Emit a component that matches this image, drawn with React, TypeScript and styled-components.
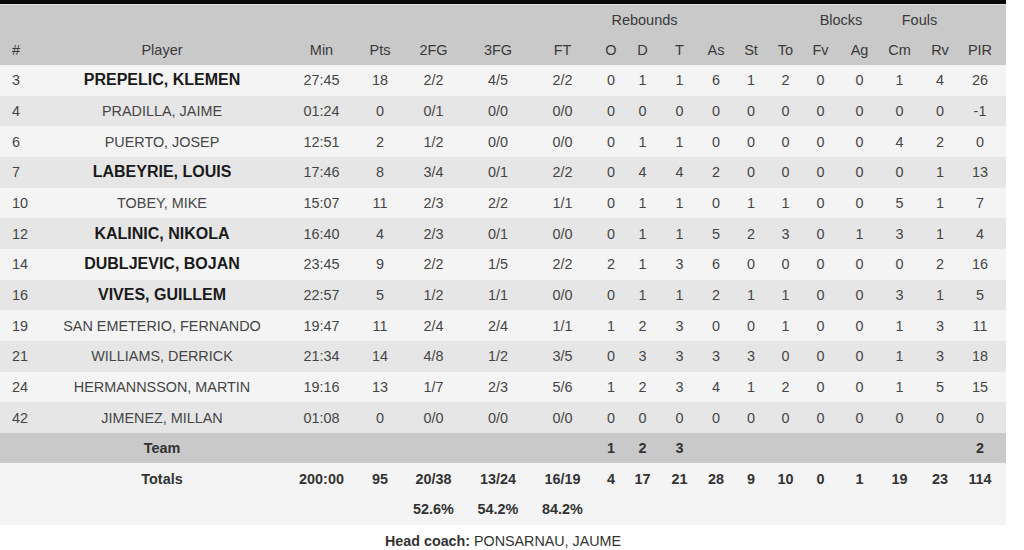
import React from "react";
import styled, { createGlobalStyle, css } from "styled-components";

const GlobalStyle = createGlobalStyle`
  html, body { margin: 0; padding: 0; background: #ffffff; }
  body { font-family: "Liberation Sans", Arial, sans-serif; }
`;

type Col = { key: string; width: number; shift: number };

const COLS: Col[] = [
  { key: "#", width: 32, shift: 0 },
  { key: "Player", width: 260, shift: 0 },
  { key: "Min", width: 59, shift: 0 },
  { key: "Pts", width: 56, shift: 1 },
  { key: "2FG", width: 59, shift: -3 },
  { key: "3FG", width: 64, shift: 0 },
  { key: "FT", width: 57, shift: 4 },
  { key: "O", width: 40, shift: 4 },
  { key: "D", width: 34, shift: -1.5 },
  { key: "T", width: 37, shift: 0 },
  { key: "As", width: 36, shift: 0 },
  { key: "St", width: 34, shift: 0 },
  { key: "To", width: 35, shift: 0 },
  { key: "Fv", width: 37, shift: -1 },
  { key: "Ag", width: 39, shift: 0 },
  { key: "Cm", width: 41, shift: 0 },
  { key: "Rv", width: 40, shift: 0 },
  { key: "PIR", width: 46, shift: -3 },
];

const TEMPLATE = COLS.map((c) => `${c.width}px`).join(" ");
const ROW_H = 30.65;

const Page = styled.div`
  width: 1006px;
`;

const TopBar = styled.div`
  height: 4px;
  background: #080808;
`;

const Row = styled.div<{ $bg: string; $h?: number; $line?: boolean }>`
  display: grid;
  grid-template-columns: ${TEMPLATE};
  height: ${(p) => p.$h ?? ROW_H}px;
  background: ${(p) => p.$bg};
  box-sizing: border-box;
  ${(p) =>
    p.$line &&
    css`
      border-top: 1px solid #e2e2e2;
    `}
`;

const Cell = styled.div<{
  $shift?: number;
  $left?: boolean;
  $bold?: boolean;
  $big?: boolean;
  $span?: string;
}>`
  display: flex;
  align-items: center;
  justify-content: ${(p) => (p.$left ? "flex-start" : "center")};
  box-sizing: border-box;
  white-space: nowrap;
  font-size: ${(p) => (p.$big ? 16 : 14.4)}px;
  font-weight: ${(p) => (p.$bold ? 700 : 400)};
  color: ${(p) => (p.$big ? "#1a1a1a" : p.$bold ? "#333333" : "#454545")};
  padding-left: ${(p) => (p.$left ? 12 : Math.max(0, (p.$shift ?? 0) * 2))}px;
  padding-right: ${(p) => Math.max(0, -(p.$shift ?? 0) * 2)}px;
  ${(p) =>
    p.$span &&
    css`
      grid-column: ${p.$span};
    `}
`;

const HeadCell = styled(Cell)`
  color: #3a3a3a;
  font-size: 14.5px;
`;

const Coach = styled.div`
  padding-top: 8px;
  text-align: center;
  font-size: 14.3px;
  color: #333333;
  line-height: 16px;
`;

const CoachLabel = styled.span`
  font-weight: 700;
`;

type Player = { no: string; name: string; bold: boolean; stats: string[] };

const PLAYERS: Player[] = [
  { no: "3", name: "PREPELIC, KLEMEN", bold: true, stats: ["27:45", "18", "2/2", "4/5", "2/2", "0", "1", "1", "6", "1", "2", "0", "0", "1", "4", "26"] },
  { no: "4", name: "PRADILLA, JAIME", bold: false, stats: ["01:24", "0", "0/1", "0/0", "0/0", "0", "0", "0", "0", "0", "0", "0", "0", "0", "0", "-1"] },
  { no: "6", name: "PUERTO, JOSEP", bold: false, stats: ["12:51", "2", "1/2", "0/0", "0/0", "0", "1", "1", "0", "0", "0", "0", "0", "4", "2", "0"] },
  { no: "7", name: "LABEYRIE, LOUIS", bold: true, stats: ["17:46", "8", "3/4", "0/1", "2/2", "0", "4", "4", "2", "0", "0", "0", "0", "0", "1", "13"] },
  { no: "10", name: "TOBEY, MIKE", bold: false, stats: ["15:07", "11", "2/3", "2/2", "1/1", "0", "1", "1", "0", "1", "1", "0", "0", "5", "1", "7"] },
  { no: "12", name: "KALINIC, NIKOLA", bold: true, stats: ["16:40", "4", "2/3", "0/1", "0/0", "0", "1", "1", "5", "2", "3", "0", "1", "3", "1", "4"] },
  { no: "14", name: "DUBLJEVIC, BOJAN", bold: true, stats: ["23:45", "9", "2/2", "1/5", "2/2", "2", "1", "3", "6", "0", "0", "0", "0", "0", "2", "16"] },
  { no: "16", name: "VIVES, GUILLEM", bold: true, stats: ["22:57", "5", "1/2", "1/1", "0/0", "0", "1", "1", "2", "1", "1", "0", "0", "3", "1", "5"] },
  { no: "19", name: "SAN EMETERIO, FERNANDO", bold: false, stats: ["19:47", "11", "2/4", "2/4", "1/1", "1", "2", "3", "0", "0", "1", "0", "0", "1", "3", "11"] },
  { no: "21", name: "WILLIAMS, DERRICK", bold: false, stats: ["21:34", "14", "4/8", "1/2", "3/5", "0", "3", "3", "3", "3", "0", "0", "0", "1", "3", "18"] },
  { no: "24", name: "HERMANNSSON, MARTIN", bold: false, stats: ["19:16", "13", "1/7", "2/3", "5/6", "1", "2", "3", "4", "1", "2", "0", "0", "1", "5", "15"] },
  { no: "42", name: "JIMENEZ, MILLAN", bold: false, stats: ["01:08", "0", "0/0", "0/0", "0/0", "0", "0", "0", "0", "0", "0", "0", "0", "0", "0", "0"] },
];

const TOTALS = ["200:00", "95", "20/38", "13/24", "16/19", "4", "17", "21", "28", "9", "10", "0", "1", "19", "23", "114"];

const HEADER_BG = "#c9c9c9";
const LIGHT = "#f4f4f4";
const DARK = "#e6e6e6";

export default function App() {
  const statCols = COLS.slice(2);
  return (
    <Page>
      <GlobalStyle />
      <TopBar />
      <Row $bg={HEADER_BG} $h={30.5} $line>
        <HeadCell $span="8 / 11" $shift={2}>Rebounds</HeadCell>
        <HeadCell $span="14 / 16">Blocks</HeadCell>
        <HeadCell $span="16 / 18">Fouls</HeadCell>
      </Row>
      <Row $bg={HEADER_BG}>
        {COLS.map((c, i) => (
          <HeadCell key={c.key} $left={i === 0} $shift={c.shift}>
            {c.key}
          </HeadCell>
        ))}
      </Row>
      {PLAYERS.map((p, r) => (
        <Row key={p.no} $bg={r % 2 === 0 ? LIGHT : DARK}>
          <Cell $left>{p.no}</Cell>
          <Cell $bold={p.bold} $big={p.bold}>
            {p.name}
          </Cell>
          {p.stats.map((s, i) => (
            <Cell key={i} $shift={statCols[i].shift}>
              {s}
            </Cell>
          ))}
        </Row>
      ))}
      <Row $bg={HEADER_BG}>
        <Cell $bold $span="2 / 3">Team</Cell>
        <Cell $bold $span="8 / 9" $shift={4}>1</Cell>
        <Cell $bold $span="9 / 10" $shift={-1.5}>2</Cell>
        <Cell $bold $span="10 / 11">3</Cell>
        <Cell $bold $span="18 / 19" $shift={-3}>2</Cell>
      </Row>
      <Row $bg={LIGHT}>
        <Cell $bold $span="2 / 3">Totals</Cell>
        {TOTALS.map((s, i) => (
          <Cell key={i} $bold $shift={statCols[i].shift}>
            {s}
          </Cell>
        ))}
      </Row>
      <Row $bg={LIGHT}>
        <Cell $bold $span="5 / 6" $shift={-3}>52.6%</Cell>
        <Cell $bold $span="6 / 7">54.2%</Cell>
        <Cell $bold $span="7 / 8" $shift={4}>84.2%</Cell>
      </Row>
      <Coach>
        <CoachLabel>Head coach:</CoachLabel> PONSARNAU, JAUME
      </Coach>
    </Page>
  );
}
